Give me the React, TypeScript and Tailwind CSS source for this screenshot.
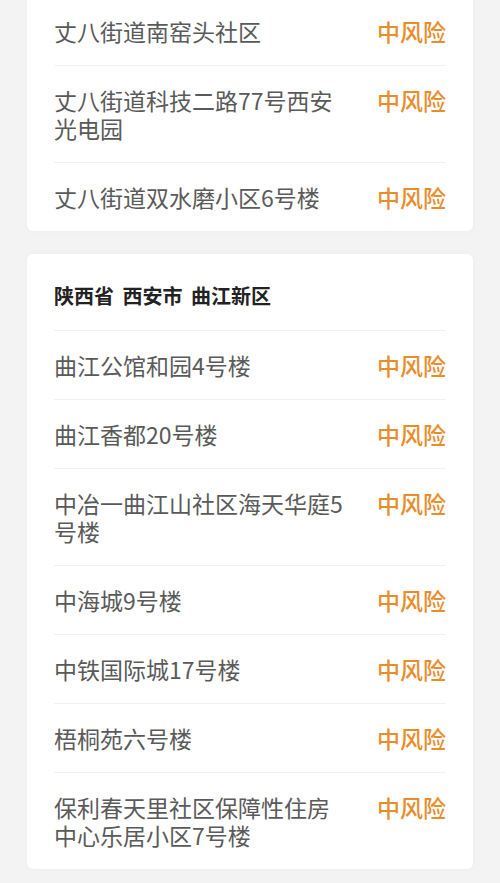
const font = { fontFamily: '"Noto Sans CJK SC", "Noto Sans", sans-serif' };

type Group = { title?: string; items: string[] };

const groups: Group[] = [
  {
    items: ["丈八街道南窑头社区", "丈八街道科技二路77号西安光电园", "丈八街道双水磨小区6号楼"],
  },
  {
    title: "陕西省 西安市 曲江新区",
    items: [
      "曲江公馆和园4号楼",
      "曲江香都20号楼",
      "中冶一曲江山社区海天华庭5号楼",
      "中海城9号楼",
      "中铁国际城17号楼",
      "梧桐苑六号楼",
      "保利春天里社区保障性住房中心乐居小区7号楼",
    ],
  },
];

function Row({ name, last }: { name: string; last: boolean }) {
  return (
    <div className={"flex justify-between items-start py-5 " + (last ? "" : "border-b border-[#f1f1f1]")}>
      <span className="max-w-[292px] text-[23px] leading-[28px] text-[#5a5a5a]">{name}</span>
      <span className="text-[23px] leading-[28px] text-[#e88d2c] font-medium whitespace-nowrap">中风险</span>
    </div>
  );
}

export default function App() {
  return (
    <div className="min-h-screen bg-[#f3f3f3] px-[27px] pb-6 -mt-[3px]" style={font}>
      <div className="flex flex-col gap-[23px]">
        {groups.map((g, gi) => (
          <div
            key={gi}
            className={
              "bg-white px-[27px] shadow-[0_0_6px_rgba(0,0,0,0.03)] " +
              (gi === 0 ? "rounded-b-md" : "rounded-md")
            }
          >
            {g.title && (
              <div className="pt-7 pb-5 border-b border-[#f1f1f1] text-[20px] leading-[28px] font-semibold text-[#222222] [word-spacing:4px]">
                {g.title}
              </div>
            )}
            {g.items.map((it, i) => (
              <Row key={it} name={it} last={i === g.items.length - 1} />
            ))}
          </div>
        ))}
      </div>
    </div>
  );
}
